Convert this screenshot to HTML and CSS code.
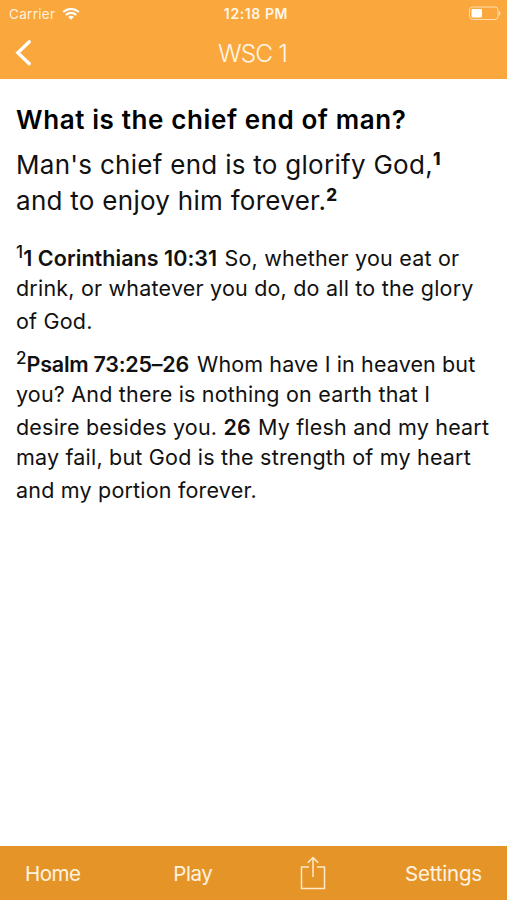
FILE: index.html
```html
<!DOCTYPE html>
<html lang="en">
<head>
    <meta charset="UTF-8">
    <meta name="viewport" content="width=device-width, initial-scale=1.0">
    <title>WSC 1</title>
    <link rel="stylesheet" href="styles.css">
</head>
<body>
    <!-- Top Bar -->
    <header class="top-bar">
        <div class="status-bar">
            <div class="carrier">
                <span>Carrier</span>
                <svg class="wifi" width="18" height="13" viewBox="0 0 18 13">
                    <path d="M1.2 5.1a11.2 11.2 0 0 1 15.6 0" fill="none" stroke="#fff" stroke-width="2.1"/>
                    <path d="M3.9 8a7.3 7.3 0 0 1 10.2 0" fill="none" stroke="#fff" stroke-width="2.1"/>
                    <path d="M6.2 10a4 4 0 0 1 5.6 0L9 12.8z" fill="#fff"/>
                </svg>
            </div>
            <div class="time">12:18 PM</div>
            <svg class="battery" width="33" height="15" viewBox="0 0 33 15">
                <rect x="1.5" y="1" width="28.5" height="12.5" rx="3" fill="none" stroke="#fddcae"/>
                <path d="M30.8 5v4.8q1.7-.7 1.7-2.4T30.8 5z" fill="#fddcae"/>
                <rect x="3.5" y="3" width="10.5" height="8.6" rx="1" fill="#fff"/>
            </svg>
        </div>
        <div class="nav-bar">
            <svg class="back" width="18" height="28" viewBox="0 0 18 28">
                <path d="M15.3 2.7L3.8 13.7l11.5 11" fill="none" stroke="#fff" stroke-width="3.3" stroke-linecap="round"/>
            </svg>
            <h1>WSC 1</h1>
        </div>
    </header>

    <!-- Question and Answer -->
    <main class="content">
        <h2 class="question">What is the chief end of man?</h2>
        <p class="answer">
            <span class="line">Man's chief end is to glorify God,<sup>1</sup></span>
            <span class="line">and to enjoy him forever.<sup>2</sup></span>
        </p>
        <p class="proof">
            <span class="line"><sup>1</sup><b>1 Corinthians 10:31</b> So, whether you eat or</span>
            <span class="line">drink, or whatever you do, do all to the glory</span>
            <span class="line tall">of God.</span>
        </p>
        <p class="proof">
            <span class="line psalm"><sup>2</sup><b>Psalm 73:25–26</b> Whom have I in heaven but</span>
            <span class="line">you? And there is nothing on earth that I</span>
            <span class="line tall">desire besides you. <b>26</b> My flesh and my heart</span>
            <span class="line">may fail, but God is the strength of my heart</span>
            <span class="line tall">and my portion forever.</span>
        </p>
    </main>

    <!-- Toolbar -->
    <footer class="toolbar">
        <span class="home">Home</span>
        <span class="play">Play</span>
        <svg class="share" width="26" height="36" viewBox="0 0 26 36">
            <path d="M9 12H1.5v21.5h23V12H17M13 22V3M7.8 7.8L13 2.6l5.2 5.2" fill="none" stroke="#ffe9c8" stroke-width="1.5"/>
        </svg>
        <span class="settings">Settings</span>
    </footer>
</body>
</html>
```
FILE: styles.css
```css
:root {
    --bar-color: #faa83d;
    --toolbar-color: #e59528;
    --font: Inter, 'Liberation Sans', sans-serif;
}

* {
    box-sizing: border-box;
}

body {
    margin: 0;
    height: 900px;
    display: flex;
    flex-direction: column;
    font-family: var(--font);
    background: #fff;
    color: #111;
    overflow: hidden;
}

/* Top Bar */
.top-bar {
    height: 79px;
    background: var(--bar-color);
    color: #fff;
}

.status-bar {
    display: grid;
    grid-template-columns: 1fr auto 1fr;
    height: 27px;
    padding: 0 6px 0 9px;
    align-items: center;
    font-size: 13.5px;
}

.carrier {
    display: flex;
    align-items: center;
    gap: 7px;
    letter-spacing: 0.3px;
    color: #fff0da;
}

.time {
    padding-left: 2px;
    font-size: 14px;
    font-weight: 600;
    letter-spacing: 0.6px;
    color: #fff6e8;
}

.battery {
    justify-self: end;
}

.nav-bar {
    display: grid;
    grid-template-columns: 1fr auto 1fr;
    height: 52px;
    padding: 0 16px 0 14px;
    align-items: center;
}

.nav-bar h1 {
    margin: 0;
    font-size: 24.5px;
    font-weight: 350;
    letter-spacing: -0.9px;
    color: #fff6e8;
}

/* Content */
.content {
    flex: 1;
    padding: 23px 16px 0;
}

.line {
    display: block;
    white-space: nowrap;
}

sup {
    line-height: 0;
}

.question {
    margin: 0;
    font-size: 26px;
    line-height: 36px;
    font-weight: 600;
    letter-spacing: 0.62px;
    color: #000;
}

.answer {
    margin: 8.5px 0 0;
    font-size: 26px;
    line-height: 36px;
    letter-spacing: 0.28px;
}

.answer sup {
    font-size: 17px;
    font-weight: 800;
    vertical-align: 9px;
}

.proof {
    margin: 24.5px 0 0;
    font-size: 21.5px;
    line-height: 30px;
    letter-spacing: 0.2px;
}

.proof + .proof {
    margin-top: 13px;
}

.proof .tall {
    padding-top: 3px;
}

.proof b {
    margin-right: 1px;
    font-weight: 600;
    letter-spacing: 0.05px;
}

.proof sup {
    font-size: 17px;
    font-weight: 500;
    vertical-align: 8px;
}

.proof .psalm {
    letter-spacing: 0.12px;
}

.psalm b {
    margin-right: 2px;
    letter-spacing: -0.25px;
}

/* Toolbar */
.toolbar {
    display: flex;
    align-items: center;
    justify-content: space-between;
    height: 54px;
    padding: 0 25px;
    background: var(--toolbar-color);
    color: #fff3e0;
    font-size: 20.5px;
    letter-spacing: -0.4px;
}

.home {
    letter-spacing: -0.5px;
}

.play {
    margin-left: 14px;
}

.share {
    margin-left: 9px;
}

.settings {
    letter-spacing: -0.2px;
}
```
